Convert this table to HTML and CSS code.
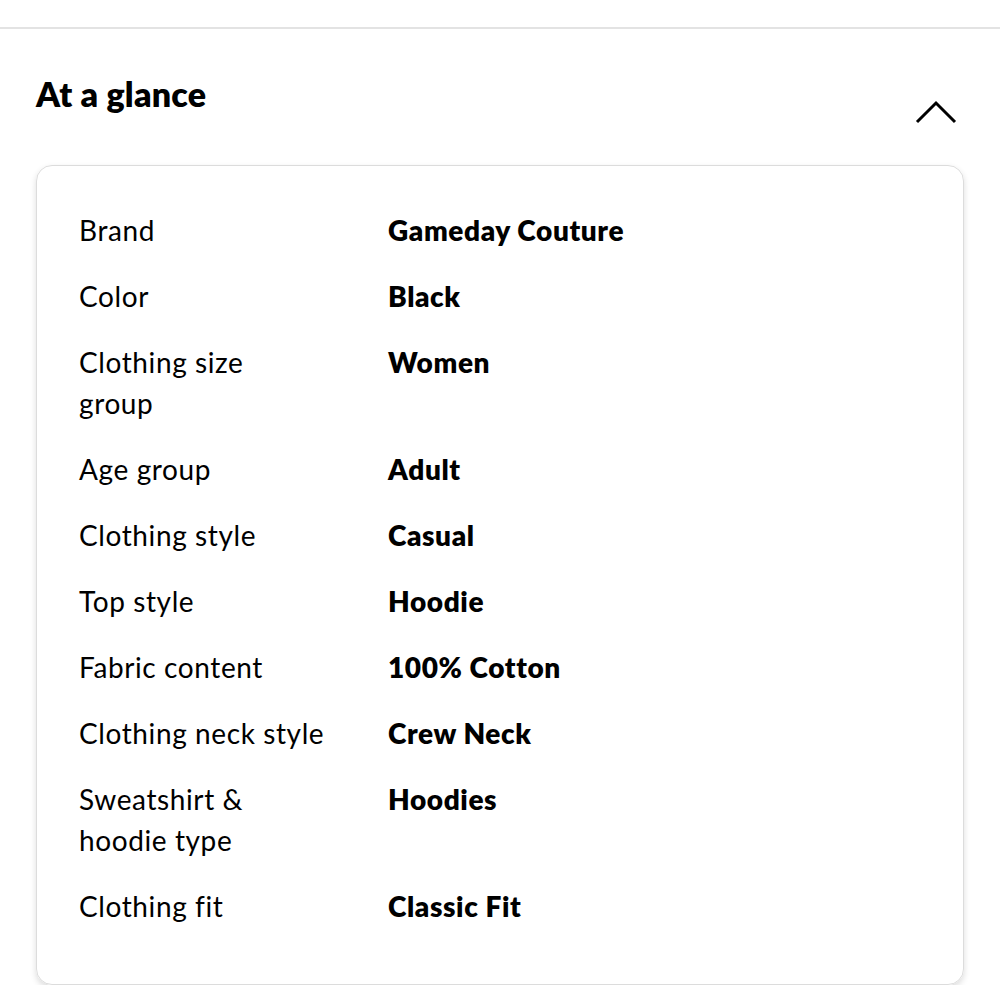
FILE: index.html
```html
<!DOCTYPE html>
<html lang="en">
<head>
    <meta charset="UTF-8">
    <meta name="viewport" content="width=device-width, initial-scale=1.0">
    <title>At a glance</title>
    <link rel="stylesheet" href="styles.css">
</head>
<body>
    <div class="section">
        <div class="head">
            <h2>At a glance</h2>
            <svg class="chev" width="44" height="28" viewBox="0 0 44 28">
                <path d="M3 24 L22 5 L41 24" fill="none" stroke="#000" stroke-width="3"/>
            </svg>
        </div>
        <div class="card">
            <div class="row"><span class="lbl">Brand</span><span class="val">Gameday Couture</span></div>
            <div class="row"><span class="lbl">Color</span><span class="val">Black</span></div>
            <div class="row"><span class="lbl">Clothing size<br>group</span><span class="val">Women</span></div>
            <div class="row"><span class="lbl">Age group</span><span class="val">Adult</span></div>
            <div class="row"><span class="lbl">Clothing style</span><span class="val">Casual</span></div>
            <div class="row"><span class="lbl">Top style</span><span class="val">Hoodie</span></div>
            <div class="row"><span class="lbl">Fabric content</span><span class="val">100% Cotton</span></div>
            <div class="row"><span class="lbl">Clothing neck style</span><span class="val">Crew Neck</span></div>
            <div class="row"><span class="lbl">Sweatshirt &amp;<br>hoodie type</span><span class="val">Hoodies</span></div>
            <div class="row"><span class="lbl">Clothing fit</span><span class="val">Classic Fit</span></div>
        </div>
    </div>
</body>
</html>
```
FILE: styles.css
```css
body {
    margin: 0;
    padding: 0;
    background-color: #fff;
    font-family: Lato, "Open Sans", sans-serif;
    color: #000;
}

.section {
    margin-top: 27px;
    border-top: 2px solid #e3e3e3;
    padding: 0 36px 0 36px;
}

.head {
    display: flex;
    justify-content: space-between;
    align-items: flex-start;
    height: 136px;
}

.head h2 {
    margin: 44px 0 0 0;
    font-size: 34px;
    font-weight: 800;
    letter-spacing: 0.2px;
}

.chev {
    margin-top: 69px;
    margin-right: 6px;
}

.card {
    border: 1px solid #dcdcdc;
    border-radius: 16px;
    box-shadow: 0 3px 6px rgba(0, 0, 0, 0.14);
    padding: 44px 42px 57px 42px;
    display: flex;
    flex-direction: column;
    gap: 25px;
}

.row {
    display: flex;
    font-size: 28px;
    line-height: 41px;
}

.lbl {
    width: 270px;
    margin-right: 39px;
    letter-spacing: 0.6px;
}

.val {
    font-weight: 800;
    letter-spacing: 0.6px;
}
```
